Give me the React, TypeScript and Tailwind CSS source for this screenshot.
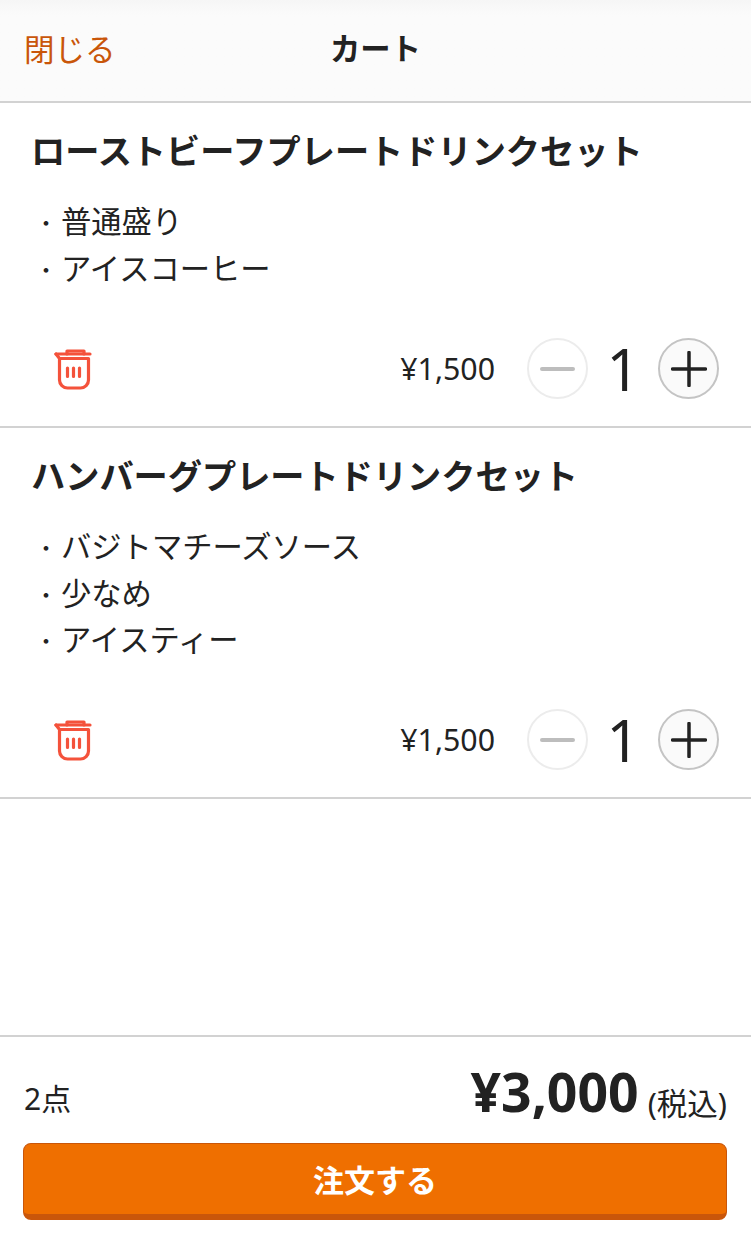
const font = '"Noto Sans", "Noto Sans CJK JP", sans-serif';

function TrashIcon() {
  return (
    <svg width="38" height="41" viewBox="0 0 38 41" fill="none" stroke="#f4523b" strokeWidth="3.200" strokeLinecap="round" strokeLinejoin="round">
      <path d="M2 5h34" />
      <path d="M13 5V2h17v3" />
      <path d="M2 5l3.500 4.500V31a8 8 0 0 0 8 8h13a8 8 0 0 0 8-8V9.500H5.500" />
      <path d="M13.500 19v8.500M19.500 19v8.500M25.500 19v8.500" />
    </svg>
  );
}

function Stepper() {
  return (
    <div className="flex items-center">
      <button className="flex h-[61px] w-[61px] items-center justify-center rounded-full border-2 border-[#ececec] bg-white">
        <span className="h-1 w-[35px] rounded-full bg-[#bdbdbd]" />
      </button>
      <span className="w-[70px] text-center text-[58px] leading-none font-normal text-[#222]">1</span>
      <button className="flex h-[61px] w-[61px] items-center justify-center rounded-full border-2 border-[#c4c4c4] bg-[#fafafa]">
        <svg width="36" height="36" viewBox="0 0 36 36" stroke="#222" strokeWidth="3.500" strokeLinecap="round">
          <path d="M1.500 18h33M18 1.500v33" />
        </svg>
      </button>
    </div>
  );
}

function CartItem({ name, options, height }: { name: string; options: string[]; height: string }) {
  return (
    <section className={`flex flex-col border-b-2 border-[#d2d2d2] pr-[32px] pl-[31px] ${height}`}>
      <h2 className="mt-[23px] text-[34.200px] leading-[50px] font-bold whitespace-nowrap text-[#222]">{name}</h2>
      <ul className="mt-[23px] text-[30.300px] leading-[46.500px] text-[#222]">
        {options.map((option) => (
          <li key={option} className="flex items-center">
            <span className="w-[30px] text-center text-[22px] leading-none">・</span>
            <span>{option}</span>
          </li>
        ))}
      </ul>
      <div className="mt-auto mb-[27px] flex items-center">
        <span className="mt-[2px] ml-[23px]">
          <TrashIcon />
        </span>
        <span className="mt-[2px] mr-[32px] ml-auto text-[30.300px] leading-none text-[#222]">¥1,500</span>
        <Stepper />
      </div>
    </section>
  );
}

export default function App() {
  return (
    <main className="flex h-[1233px] w-[751px] flex-col overflow-hidden bg-white" style={{ fontFamily: font }}>
      <header className="relative flex h-[103px] shrink-0 items-center justify-center border-b-2 border-[#d2d2d2] bg-gradient-to-b from-[#f6f6f6] via-[#fbfbfb] via-15% to-[#fbfbfb]">
        <button className="absolute top-[26px] left-[24px] text-[30.500px] leading-[46px] text-[#c9560a]">閉じる</button>
        <h1 className="-mt-[4px] text-[30.300px] leading-[46px] font-bold text-[#222]">カート</h1>
      </header>
      <CartItem name="ローストビーフプレートドリンクセット" options={['普通盛り', 'アイスコーヒー']} height="h-[325px]" />
      <CartItem name="ハンバーグプレートドリンクセット" options={['バジトマチーズソース', '少なめ', 'アイスティー']} height="h-[371px]" />
      <div className="flex-1" />
      <footer className="h-[198px] shrink-0 border-t-2 border-[#d2d2d2] pr-[24px] pl-[23px]">
        <div className="mt-[19px] flex h-[72px] items-end justify-between">
          <span className="mb-[6px] ml-px text-[30px] leading-[46px] text-[#222]">2点</span>
          <div className="flex items-end">
            <span className="mr-px text-[53.500px] leading-[72px] font-bold text-[#222]">¥3,000</span>
            <span className="mb-[2px] ml-[8px] text-[30.500px] leading-[46px] text-[#222]">(税込)</span>
          </div>
        </div>
        <button className="mt-[15px] flex h-[77px] w-full items-center justify-center rounded-[8px] border-x border-t border-b-[6px] border-[#c9560a] bg-[#ef6f00] pt-[2px] text-[31px] font-bold text-white">
          注文する
        </button>
      </footer>
    </main>
  );
}
